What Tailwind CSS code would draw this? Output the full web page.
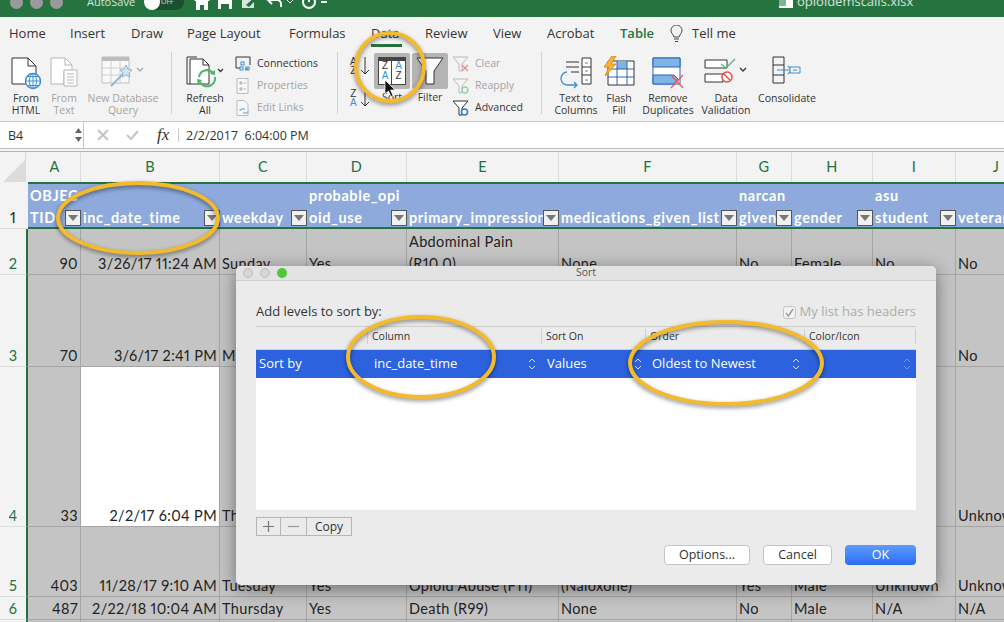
<!DOCTYPE html>
<html>
<head>
<meta charset="utf-8">
<script src="https://cdn.jsdelivr.net/npm/@tailwindcss/browser@4"></script>
</head>
<body class="m-0 bg-white overflow-hidden">
<div class="relative w-[1004px] h-[622px] overflow-hidden bg-[#f3f3f3] font-['Open_Sans',sans-serif] text-[#333]">

  <!-- Title bar -->
  <div class="h-[17px] bg-[#25743f] overflow-hidden text-white/80 text-[11px]">
    <div class="flex items-center h-[4px] pl-[10px]">
      <span class="w-[13px] h-[13px] rounded-full bg-[#9a9a9a] mr-[7px] shrink-0"></span>
      <span class="w-[13px] h-[13px] rounded-full bg-[#9a9a9a] mr-[7px] shrink-0"></span>
      <span class="w-[13px] h-[13px] rounded-full bg-[#9a9a9a] shrink-0"></span>
      <span class="ml-[24px] w-[57px] shrink-0">AutoSave</span>
      <span class="relative w-[40px] h-[16px] rounded-full bg-[#1c4f2f] shrink-0 text-[7px] pl-[17px] leading-[16px]">OFF<span class="absolute left-0 top-0 w-[16px] h-[16px] rounded-full bg-white"></span></span>
      <svg class="ml-[9px] shrink-0" width="18" height="18" viewBox="0 0 18 18"><path d="M1 8 9 1l8 7h-2v9h-4v-5H7v5H3V8z" fill="#fff"/></svg>
      <svg class="ml-[6px] shrink-0" width="16" height="16" viewBox="0 0 16 16"><path d="M1 1h11l3 3v11H1z" fill="#fff"/><path d="M4 10h8v5H4z" fill="#22713f"/></svg>
      <svg class="ml-[8px] shrink-0" width="18" height="18" viewBox="0 0 18 18"><path d="M1 3h12v12H1z" fill="#d9e6dd"/><path d="M5 12 15 3l2 2-9 9z" fill="#22713f"/></svg>
      <svg class="ml-[7px] shrink-0" width="18" height="14" viewBox="0 0 18 14"><path d="M6 1 2 5l4 4M2 5h9a4 4 0 0 1 4 4v3" fill="none" stroke="#fff" stroke-width="2"/></svg>
      <svg class="ml-[2px] shrink-0" width="8" height="6" viewBox="0 0 8 6"><path d="m1 1 3 3 3-3" fill="none" stroke="#fff"/></svg>
      <svg class="ml-[7px] shrink-0" width="16" height="16" viewBox="0 0 16 16"><circle cx="8" cy="8" r="6" fill="none" stroke="#fff" stroke-width="2"/><path d="M8 4v4" stroke="#fff" stroke-width="2"/></svg>
      <svg class="ml-[3px] shrink-0" width="8" height="14" viewBox="0 0 8 14"><path d="M1 7h6" stroke="#fff" stroke-width="2"/></svg>
      <svg class="ml-[451px] shrink-0" width="14" height="14" viewBox="0 0 14 14"><path d="M0 1h14v12H0z" fill="#fff"/><path d="M0 1h7v10H0z" fill="#7db595"/></svg>
      <span class="ml-[4px] shrink-0 text-[13px]">opioidemscalls.xlsx</span>
    </div>
  </div>

  <!-- Ribbon -->
  <div class="h-[105px] bg-[#f3f3f3] border-b border-[#c9c9c9]">
    <div class="relative flex h-[33px] items-center text-[13px] text-[#333] leading-none">
      <span class="ml-[9px] w-[61px]">Home</span>
      <span class="w-[61px]">Insert</span>
      <span class="w-[56px]">Draw</span>
      <span class="w-[102px]">Page Layout</span>
      <span class="w-[82px]">Formulas</span>
      <span class="relative w-[54px]">Data<span class="absolute left-0 top-[17px] w-[31px] h-[3px] bg-[#22713f]"></span></span>
      <span class="w-[68px]">Review</span>
      <span class="w-[54px]">View</span>
      <span class="w-[73px]">Acrobat</span>
      <span class="w-[50px] text-[#22713f] font-semibold">Table</span>
      <svg width="13" height="18" viewBox="0 0 13 18" class="mr-[9px]"><path d="M4 12C3 9 1 8 1 5.500a5.500 5.500 0 0 1 11 0C12 8 10 9 9 12zM4 14h5M5 16.500h3" fill="none" stroke="#444"/></svg>
      <span>Tell me</span>
    </div>

    <div class="flex h-[72px] pl-[7px] text-[10.5px] leading-[11.500px] text-center">
      <!-- From HTML -->
      <div class="w-[38px] flex flex-col items-center">
        <svg class="mt-[6px] h-[34px]" width="30" height="34" viewBox="0 0 30 34"><path d="M1 2h16l8 8v18H1z" fill="#fff" stroke="#333"/><path d="M17 2v8h8" fill="none" stroke="#333"/><circle cx="22" cy="25" r="7.500" fill="#fff" stroke="#3a8fd6" stroke-width="1.400"/><path d="M14.500 25h15M22 17.500v15M17 20.500h10M17 29.500h10" stroke="#3a8fd6"/><ellipse cx="22" cy="25" rx="3.500" ry="7.500" fill="none" stroke="#3a8fd6"/></svg>
        <span class="mt-[3px]">From<br>HTML</span>
      </div>
      <!-- From Text -->
      <div class="w-[38px] flex flex-col items-center text-[#a3a3a3]">
        <svg class="mt-[6px] h-[34px]" width="28" height="34" viewBox="0 0 28 34"><path d="M1 2h14l7 7v6H14v13H1z" fill="#fff" stroke="#b5b5b5"/><path d="M15 2v7h7" fill="none" stroke="#b5b5b5"/><path d="M14 14h13v16H14z" fill="#fff" stroke="#b5b5b5"/><path d="M17 18h7M17 21h7M17 24h7M17 27h7" stroke="#b5b5b5"/></svg>
        <span class="mt-[3px]">From<br>Text</span>
      </div>
      <!-- New Database Query -->
      <div class="w-[80px] flex flex-col items-center text-[#a3a3a3]">
        <svg class="mt-[6px] h-[34px]" width="44" height="34" viewBox="0 0 44 34"><path d="M1 1h27v26H1z" fill="#f8f8f8" stroke="#bdbdbd"/><path d="M1 1h27v4H1z" fill="#bdbdbd"/><path d="M10 5v22M19 5v22M1 12h27M1 19h27" stroke="#cfcfcf"/><path d="m10 30 14-14" stroke="#8bb8dc" stroke-width="2"/><path d="m25 9 2 4 4 1-3 3 1 4-4-2-4 2 1-4-3-3 4-1z" fill="#cfe2f1" stroke="#8bb8dc"/><path d="m36 12 3 3 3-3" fill="none" stroke="#aaa" stroke-width="1.400"/></svg>
        <span class="mt-[3px] whitespace-nowrap">New Database<br>Query</span>
      </div>
      <div class="w-px h-[62px] bg-[#d3d3d3] ml-[8px] mt-[2px]"></div>
      <!-- Refresh -->
      <div class="w-[44px] ml-[11px] flex flex-col items-center">
        <svg class="mt-[6px] h-[34px] overflow-visible" width="38" height="34" viewBox="0 0 38 34"><path d="M1 1h10M1 1v27h3" fill="none" stroke="#333"/><path d="M4 3h13l6 6v19H4z" fill="#fff" stroke="#333"/><path d="M17 3v6h6" fill="none" stroke="#333"/><path d="M13 21a8 8 0 0 1 14-4M29 21a8 8 0 0 1-15 5" fill="none" stroke="#4eb46a" stroke-width="2"/><path d="m24 18 5 1 0-5zM16 24l-5-1 1 6z" fill="#4eb46a"/><path d="m32 13 2.500 2.500L37 13" fill="none" stroke="#333" stroke-width="1.300"/></svg>
        <span class="mt-[3px]">Refresh<br>All</span>
      </div>
      <!-- Connections -->
      <div class="ml-[8px] w-[102px] flex flex-col gap-[6px] text-left pt-[6px] whitespace-nowrap">
        <div class="flex items-center h-[16px]"><svg width="16" height="16" viewBox="0 0 16 16"><path d="M1 12V1h14v8" fill="none" stroke="#333"/><path d="M1 12h4M10 13h3" stroke="#333"/><rect x="6" y="6" width="3" height="3" fill="none" stroke="#3a8fd6"/><rect x="5" y="11" width="3" height="3" fill="none" stroke="#3a8fd6"/><rect x="11" y="11" width="3" height="3" fill="none" stroke="#3a8fd6"/></svg><span class="ml-[6px]">Connections</span></div>
        <div class="flex items-center h-[16px] text-[#a3a3a3]"><svg width="16" height="16" viewBox="0 0 16 16"><path d="M2 0.500h11v15H2z" fill="#f8f8f8" stroke="#bbb"/><path d="M5 4h2v2H5zM5 10h2v2H5zM9 5h2M9 11h2" fill="none" stroke="#aaa"/></svg><span class="ml-[6px]">Properties</span></div>
        <div class="flex items-center h-[16px] text-[#a3a3a3]"><svg width="16" height="16" viewBox="0 0 16 16"><path d="M2 0.500h7l4 4v11H2z" fill="#f8f8f8" stroke="#bbb"/><path d="M5 11a2 2 0 0 1 2-2h3M13 11a2 2 0 0 1-2 2H8" fill="none" stroke="#8bb8dc" stroke-width="1.300"/></svg><span class="ml-[6px]">Edit Links</span></div>
      </div>
      <div class="w-px h-[62px] bg-[#d3d3d3] mt-[2px]"></div>
      <!-- Sort small -->
      <div class="w-[22px] ml-[12px] flex flex-col gap-[12px] pt-[6px] font-['Liberation_Sans',sans-serif] text-[10px] leading-[9px]">
        <div class="flex items-center"><span>A<br>Z</span><svg width="10" height="20" viewBox="0 0 10 20" class="ml-[3px]"><path d="M5 1v17M1 14l4 4 4-4" fill="none" stroke="#333"/></svg></div>
        <div class="flex items-center"><span>Z<br><span class="text-[#3a8fd6]">A</span></span><svg width="10" height="20" viewBox="0 0 10 20" class="ml-[3px]"><path d="M5 1v17M1 14l4 4 4-4" fill="none" stroke="#333"/></svg></div>
      </div>
      <!-- Sort -->
      <div class="w-[36px] ml-[2px] flex flex-col items-center">
        <div class="mt-[3px] w-[36px] h-[36px] bg-[#b4b4b4] rounded-[2px] flex items-center justify-center">
          <div class="w-[28px] h-[28px] border border-[#444] border-t-[4px] bg-white grid grid-cols-2 font-['Liberation_Sans',sans-serif] text-[10px] leading-[10px]">
            <span class="border-r border-[#444]">Z<br><span class="text-[#3a8fd6]">A</span></span>
            <span><span class="text-[#3a8fd6]">A</span><br>Z</span>
          </div>
        </div>
        <span class="mt-[3px]">Sort</span>
      </div>
      <!-- Filter -->
      <div class="w-[36px] ml-[2px] flex flex-col items-center">
        <div class="mt-[3px] w-[36px] h-[36px] bg-[#b4b4b4] rounded-[2px] flex items-center justify-center">
          <svg width="28" height="30" viewBox="0 0 28 30"><path d="M1 2h26L18 15v13h-8V15z" fill="#fff" stroke="#333"/></svg>
        </div>
        <span class="mt-[3px]">Filter</span>
      </div>
      <!-- Clear etc -->
      <div class="ml-[4px] w-[89px] flex flex-col gap-[6px] text-left pt-[6px]">
        <div class="flex items-center h-[16px] text-[#a3a3a3]"><svg width="17" height="16" viewBox="0 0 17 16"><path d="M1 1h15L10 8v7H7V8z" fill="none" stroke="#bbb"/><path d="m10 9 6 6m0-6-6 6" stroke="#e88" stroke-width="1.200"/></svg><span class="ml-[6px]">Clear</span></div>
        <div class="flex items-center h-[16px] text-[#a3a3a3]"><svg width="17" height="16" viewBox="0 0 17 16"><path d="M1 1h15L10 8v7H7V8z" fill="none" stroke="#bbb"/><circle cx="13" cy="12" r="3" fill="none" stroke="#8fd3a2" stroke-width="1.300"/></svg><span class="ml-[6px]">Reapply</span></div>
        <div class="flex items-center h-[16px]"><svg width="17" height="16" viewBox="0 0 17 16"><path d="M1 1h15L10 8v7H7V8z" fill="#fff" stroke="#333"/><circle cx="12.500" cy="12" r="3" fill="#fff" stroke="#2e7cc4" stroke-width="1.600"/></svg><span class="ml-[6px]">Advanced</span></div>
      </div>
      <div class="w-px h-[62px] bg-[#d3d3d3] mt-[2px]"></div>
      <!-- Text to Columns -->
      <div class="w-[68px] flex flex-col items-center">
        <svg class="mt-[6px] h-[34px]" width="32" height="34" viewBox="0 0 32 34"><path d="M6 6h13M6 11h13M11 16h8" stroke="#333"/><path d="M22 2h9v26h-9zM22 11h9M22 19h9" fill="#fff" stroke="#333"/><path d="M25 7h3M25 15h3M25 24h3" stroke="#3a8fd6"/><path d="M7 16a6 6 0 0 0 1 13h9m-3-3 3 3-3 3" fill="none" stroke="#3a8fd6" stroke-width="1.300"/></svg>
        <span class="mt-[3px] whitespace-nowrap">Text to<br>Columns</span>
      </div>
      <!-- Flash Fill -->
      <div class="w-[42px] -ml-[12px] flex flex-col items-center">
        <svg class="mt-[6px] h-[34px]" width="32" height="34" viewBox="0 0 32 34"><path d="M5 5h26v24H5z" fill="#fff" stroke="#333"/><path d="M14 5h10v8H14z" fill="#7fb5e6"/><path d="M5 13h26M5 21h26M14 5v24M24 5v24" stroke="#2b63b8"/><path d="M9 0 1 11h5l-4 9 11-12H8l5-8z" fill="#f7b33c" stroke="#e08a1e"/></svg>
        <span class="mt-[3px]">Flash<br>Fill</span>
      </div>
      <!-- Remove Dup -->
      <div class="w-[56px] flex flex-col items-center">
        <svg class="mt-[6px] h-[34px]" width="32" height="34" viewBox="0 0 32 34"><path d="M1 2h27v26H1z" fill="#fff" stroke="#2b63b8"/><path d="M1 2h27v9H1zM1 19h21l4 4-4 5H1z" fill="#7fb5e6" stroke="#2b63b8"/><path d="m19 19 12 13m0-13L19 32" stroke="#ef5b5b" stroke-width="1.300"/></svg>
        <span class="mt-[3px] whitespace-nowrap">Remove<br>Duplicates</span>
      </div>
      <!-- Data Validation -->
      <div class="w-[60px] flex flex-col items-center">
        <svg class="mt-[6px] h-[34px]" width="44" height="34" viewBox="0 0 44 34"><path d="M1 4h22v8H1zM1 18h18v8H1z" fill="#fff" stroke="#333"/><path d="m17 8 5 4 9-9" fill="none" stroke="#4eb46a" stroke-width="1.300"/><circle cx="23" cy="21" r="5" fill="#fff" stroke="#e84c4c" stroke-width="1.500"/><path d="m19.500 17.500 7 7" stroke="#e84c4c" stroke-width="1.500"/><path d="m36 12 3 3 3-3" fill="none" stroke="#333" stroke-width="1.300"/></svg>
        <span class="mt-[3px]">Data<br>Validation</span>
      </div>
      <!-- Consolidate -->
      <div class="w-[62px] flex flex-col items-center">
        <svg class="mt-[6px] h-[34px]" width="30" height="34" viewBox="0 0 30 34"><path d="M1 1h11v26H1zM1 9h11M1 19h11" fill="none" stroke="#333"/><path d="M5 14h15m-4-4 4 4-4 4" fill="none" stroke="#3a8fd6" stroke-width="1.200"/><path d="M18 11h10v6H18z" fill="#f3f3f3" stroke="#3a8fd6"/><path d="M21 14h4" stroke="#3a8fd6"/></svg>
        <span class="mt-[3px]">Consolidate</span>
      </div>
    </div>
  </div>

  <!-- Formula bar -->
  <div class="flex h-[27px] bg-white border-b border-[#c0c0c0] items-center text-[12.5px]">
    <span class="w-[74px] pl-[8px] pt-[3px]">B4</span>
    <svg width="9" height="16" viewBox="0 0 9 16"><path d="M1 6h7L4.500 1zM1 10h7l-3.500 5z" fill="#666"/></svg>
    <span class="w-px h-[27px] bg-[#c9c9c9]"></span>
    <svg class="ml-[13px]" width="12" height="12" viewBox="0 0 12 12"><path d="m1 1 10 10m0-10L1 11" stroke="#c4c4c4" stroke-width="2"/></svg>
    <svg class="ml-[17px]" width="13" height="12" viewBox="0 0 13 12"><path d="m1 6 4 4 7-8" fill="none" stroke="#c4c4c4" stroke-width="2"/></svg>
    <span class="ml-[18px] w-[20px] font-['Liberation_Serif',serif] italic text-[17px]">fx</span>
    <span class="w-px h-[14px] bg-[#c9c9c9] ml-[1px]"></span>
    <span class="ml-[7px] pt-[2px] text-[12.5px] whitespace-pre">2/2/2017  6:04:00 PM</span>
  </div>

  <!-- Sheet -->
  <div class="pt-[1px] bg-[#f3f3f3] border-t border-[#f3f3f3]">
  <div class="grid grid-cols-[26px_55px_139px_87px_100px_152px_178px_55px_81px_83px_80px] grid-rows-[30px_47px_46px_92px_160px_70px_23px_30px] font-['Lato',sans-serif] text-[14.5px] tracking-[0.35px] leading-[18px] text-[#222] proportional-nums border-t border-[#b5b5b5] bg-[#f3f3f3] [&>*]:flex [&>*]:overflow-hidden [&>*]:whitespace-nowrap">
    <!-- column header -->
    <div class="bg-[#f3f3f3] items-end justify-end border-r border-[#d9d9d9]"><svg width="24" height="24" viewBox="0 0 24 24"><path d="M24 2v22H2z" fill="#dcdcdc"/></svg></div>
    <div class="bg-[#f3f3f3] items-center justify-center pl-[3px] text-[#22713f] border-r border-[#dcdcdc]">A</div>
    <div class="bg-[#f3f3f3] items-center justify-center text-[#22713f] border-r border-[#dcdcdc]">B</div>
    <div class="bg-[#f3f3f3] items-center justify-center text-[#22713f] border-r border-[#dcdcdc]">C</div>
    <div class="bg-[#f3f3f3] items-center justify-center text-[#22713f] border-r border-[#dcdcdc]">D</div>
    <div class="bg-[#f3f3f3] items-center justify-center text-[#22713f] border-r border-[#dcdcdc]">E</div>
    <div class="bg-[#f3f3f3] items-center justify-center text-[#22713f] border-r border-[#dcdcdc]">F</div>
    <div class="bg-[#f3f3f3] items-center justify-center text-[#22713f] border-r border-[#dcdcdc]">G</div>
    <div class="bg-[#f3f3f3] items-center justify-center text-[#22713f] border-r border-[#dcdcdc]">H</div>
    <div class="bg-[#f3f3f3] items-center justify-center text-[#22713f] border-r border-[#dcdcdc]">I</div>
    <div class="bg-[#f3f3f3] items-center justify-center text-[#22713f]">J</div>

    <!-- row 1 -->
    <div class="bg-[#f3f3f3] items-end justify-center pb-[1px] border-b border-[#dcdcdc]">1</div>
    <div class="ml-[2px] col-span-10 !grid grid-cols-[53px_139px_87px_100px_152px_178px_55px_81px_83px_80px] bg-[#8ea9db] border-y-2 border-[#22713f] text-white font-bold tracking-[0.6px] leading-[22px] [&>*]:relative [&>*]:-mb-[2px] [&>*]:block [&>*]:self-end [&>*]:pl-[2px] [&>*]:overflow-hidden">
      <div>OBJEC<br>TID<span class="absolute right-0 bottom-[3px] w-[16px] h-[16px] bg-[#f0f0f0] border border-[#555] flex items-center justify-center"><svg width="10" height="6" viewBox="0 0 10 6"><path d="M0 0h10L5 6z" fill="#777"/></svg></span></div>
      <div>inc_date_time<span class="absolute right-0 bottom-[3px] w-[16px] h-[16px] bg-[#f0f0f0] border border-[#555] flex items-center justify-center"><svg width="10" height="6" viewBox="0 0 10 6"><path d="M0 0h10L5 6z" fill="#777"/></svg></span></div>
      <div>weekday<span class="absolute right-0 bottom-[3px] w-[16px] h-[16px] bg-[#f0f0f0] border border-[#555] flex items-center justify-center"><svg width="10" height="6" viewBox="0 0 10 6"><path d="M0 0h10L5 6z" fill="#777"/></svg></span></div>
      <div>probable_opi<br>oid_use<span class="absolute right-0 bottom-[3px] w-[16px] h-[16px] bg-[#f0f0f0] border border-[#555] flex items-center justify-center"><svg width="10" height="6" viewBox="0 0 10 6"><path d="M0 0h10L5 6z" fill="#777"/></svg></span></div>
      <div>primary_impression<span class="absolute right-0 bottom-[3px] w-[16px] h-[16px] bg-[#f0f0f0] border border-[#555] flex items-center justify-center"><svg width="10" height="6" viewBox="0 0 10 6"><path d="M0 0h10L5 6z" fill="#777"/></svg></span></div>
      <div>medications_given_list<span class="absolute right-0 bottom-[3px] w-[16px] h-[16px] bg-[#f0f0f0] border border-[#555] flex items-center justify-center"><svg width="10" height="6" viewBox="0 0 10 6"><path d="M0 0h10L5 6z" fill="#777"/></svg></span></div>
      <div>narcan<br>given<span class="absolute right-0 bottom-[3px] w-[16px] h-[16px] bg-[#f0f0f0] border border-[#555] flex items-center justify-center"><svg width="10" height="6" viewBox="0 0 10 6"><path d="M0 0h10L5 6z" fill="#777"/></svg></span></div>
      <div>gender<span class="absolute right-0 bottom-[3px] w-[16px] h-[16px] bg-[#f0f0f0] border border-[#555] flex items-center justify-center"><svg width="10" height="6" viewBox="0 0 10 6"><path d="M0 0h10L5 6z" fill="#777"/></svg></span></div>
      <div>asu<br>student<span class="absolute right-0 bottom-[3px] w-[16px] h-[16px] bg-[#f0f0f0] border border-[#555] flex items-center justify-center"><svg width="10" height="6" viewBox="0 0 10 6"><path d="M0 0h10L5 6z" fill="#777"/></svg></span></div>
      <div>veteran</div>
    </div>

    <!-- row 2 -->
    <div class="bg-[#f3f3f3] items-end justify-center text-[#22713f] pb-[1px] border-b border-[#dcdcdc]">2</div>
    <div class="bg-[#c4c4c4] border-l-2 border-[#22713f] border-r border-b border-r-[#a5a5a5] border-b-[#a5a5a5] items-end justify-end pr-[2px] pb-[1px]">90</div>
    <div class="bg-[#c4c4c4] border-r border-b border-[#a5a5a5] items-end justify-end pr-[2px] pb-[1px]">3/26/17 11:24 AM</div>
    <div class="bg-[#c4c4c4] border-r border-b border-[#a5a5a5] items-end pl-[2px] pb-[1px]">Sunday</div>
    <div class="bg-[#c4c4c4] border-r border-b border-[#a5a5a5] items-end pl-[2px] pb-[1px]">Yes</div>
    <div class="bg-[#c4c4c4] border-r border-b border-[#a5a5a5] items-start pl-[2px] pt-[2px] leading-[22px]">Abdominal Pain<br>(R10.0)</div>
    <div class="bg-[#c4c4c4] border-r border-b border-[#a5a5a5] items-end pl-[2px] pb-[1px]">None</div>
    <div class="bg-[#c4c4c4] border-r border-b border-[#a5a5a5] items-end pl-[2px] pb-[1px]">No</div>
    <div class="bg-[#c4c4c4] border-r border-b border-[#a5a5a5] items-end pl-[2px] pb-[1px]">Female</div>
    <div class="bg-[#c4c4c4] border-r border-b border-[#a5a5a5] items-end pl-[2px] pb-[1px]">No</div>
    <div class="bg-[#c4c4c4] border-b border-[#a5a5a5] items-end pl-[2px] pb-[1px]">No</div>

    <!-- row 3 -->
    <div class="bg-[#f3f3f3] items-end justify-center text-[#22713f] pb-[1px] border-b border-[#dcdcdc]">3</div>
    <div class="bg-[#c4c4c4] border-l-2 border-[#22713f] border-r border-b border-r-[#a5a5a5] border-b-[#a5a5a5] items-end justify-end pr-[2px] pb-[1px]">70</div>
    <div class="bg-[#c4c4c4] border-r border-b border-[#a5a5a5] items-end justify-end pr-[2px] pb-[1px]">3/6/17 2:41 PM</div>
    <div class="bg-[#c4c4c4] border-r border-b border-[#a5a5a5] items-end pl-[2px] pb-[1px]">Monday</div>
    <div class="bg-[#c4c4c4] border-r border-b border-[#a5a5a5]"></div>
    <div class="bg-[#c4c4c4] border-r border-b border-[#a5a5a5]"></div>
    <div class="bg-[#c4c4c4] border-r border-b border-[#a5a5a5]"></div>
    <div class="bg-[#c4c4c4] border-r border-b border-[#a5a5a5]"></div>
    <div class="bg-[#c4c4c4] border-r border-b border-[#a5a5a5]"></div>
    <div class="bg-[#c4c4c4] border-r border-b border-[#a5a5a5]"></div>
    <div class="bg-[#c4c4c4] border-b border-[#a5a5a5] items-end pl-[2px] pb-[1px]">No</div>

    <!-- row 4 -->
    <div class="bg-[#f3f3f3] items-end justify-center text-[#22713f] pb-[1px] border-b border-[#dcdcdc]">4</div>
    <div class="bg-[#c4c4c4] border-l-2 border-[#22713f] border-r border-b border-r-[#a5a5a5] border-b-[#a5a5a5] items-end justify-end pr-[2px] pb-[1px]">33</div>
    <div class="bg-white border-r border-b border-[#a5a5a5] items-end justify-end pr-[2px] pb-[1px]">2/2/17 6:04 PM</div>
    <div class="bg-[#c4c4c4] border-r border-b border-[#a5a5a5] items-end pl-[2px] pb-[1px]">Thursday</div>
    <div class="bg-[#c4c4c4] border-r border-b border-[#a5a5a5]"></div>
    <div class="bg-[#c4c4c4] border-r border-b border-[#a5a5a5]"></div>
    <div class="bg-[#c4c4c4] border-r border-b border-[#a5a5a5]"></div>
    <div class="bg-[#c4c4c4] border-r border-b border-[#a5a5a5]"></div>
    <div class="bg-[#c4c4c4] border-r border-b border-[#a5a5a5]"></div>
    <div class="bg-[#c4c4c4] border-r border-b border-[#a5a5a5]"></div>
    <div class="bg-[#c4c4c4] border-b border-[#a5a5a5] items-end pl-[2px] pb-[1px]">Unknown</div>

    <!-- row 5 -->
    <div class="bg-[#f3f3f3] items-end justify-center text-[#22713f] pb-[1px] border-b border-[#dcdcdc]">5</div>
    <div class="bg-[#c4c4c4] border-l-2 border-[#22713f] border-r border-b border-r-[#a5a5a5] border-b-[#a5a5a5] items-end justify-end pr-[2px] pb-[1px]">403</div>
    <div class="bg-[#c4c4c4] border-r border-b border-[#a5a5a5] items-end justify-end pr-[2px] pb-[1px]">11/28/17 9:10 AM</div>
    <div class="bg-[#c4c4c4] border-r border-b border-[#a5a5a5] items-end pl-[2px] pb-[1px]">Tuesday</div>
    <div class="bg-[#c4c4c4] border-r border-b border-[#a5a5a5] items-end pl-[2px] pb-[1px]">Yes</div>
    <div class="bg-[#c4c4c4] border-r border-b border-[#a5a5a5] items-end pl-[2px] pb-[1px]">Opioid Abuse (F11)</div>
    <div class="bg-[#c4c4c4] border-r border-b border-[#a5a5a5] items-end pl-[2px] pb-[1px]">(Naloxone)</div>
    <div class="bg-[#c4c4c4] border-r border-b border-[#a5a5a5] items-end pl-[2px] pb-[1px]">Yes</div>
    <div class="bg-[#c4c4c4] border-r border-b border-[#a5a5a5] items-end pl-[2px] pb-[1px]">Male</div>
    <div class="bg-[#c4c4c4] border-r border-b border-[#a5a5a5] items-end pl-[2px] pb-[1px]">Unknown</div>
    <div class="bg-[#c4c4c4] border-b border-[#a5a5a5] items-end pl-[2px] pb-[1px]">Unknown</div>

    <!-- row 6 -->
    <div class="bg-[#f3f3f3] items-end justify-center text-[#22713f] pb-[1px] border-b border-[#dcdcdc]">6</div>
    <div class="bg-[#c4c4c4] border-l-2 border-[#22713f] border-r border-b border-r-[#a5a5a5] border-b-[#a5a5a5] items-end justify-end pr-[2px] pb-[1px]">487</div>
    <div class="bg-[#c4c4c4] border-r border-b border-[#a5a5a5] items-end justify-end pr-[2px] pb-[1px]">2/22/18 10:04 AM</div>
    <div class="bg-[#c4c4c4] border-r border-b border-[#a5a5a5] items-end pl-[2px] pb-[1px]">Thursday</div>
    <div class="bg-[#c4c4c4] border-r border-b border-[#a5a5a5] items-end pl-[2px] pb-[1px]">Yes</div>
    <div class="bg-[#c4c4c4] border-r border-b border-[#a5a5a5] items-end pl-[2px] pb-[1px]">Death (R99)</div>
    <div class="bg-[#c4c4c4] border-r border-b border-[#a5a5a5] items-end pl-[2px] pb-[1px]">None</div>
    <div class="bg-[#c4c4c4] border-r border-b border-[#a5a5a5] items-end pl-[2px] pb-[1px]">No</div>
    <div class="bg-[#c4c4c4] border-r border-b border-[#a5a5a5] items-end pl-[2px] pb-[1px]">Male</div>
    <div class="bg-[#c4c4c4] border-r border-b border-[#a5a5a5] items-end pl-[2px] pb-[1px]">N/A</div>
    <div class="bg-[#c4c4c4] border-b border-[#a5a5a5] items-end pl-[2px] pb-[1px]">N/A</div>

    <!-- row 7 -->
    <div class="bg-[#f3f3f3]"></div>
    <div class="bg-[#c4c4c4] border-l-2 border-[#22713f] border-r border-r-[#a5a5a5]"></div>
    <div class="bg-[#c4c4c4] border-r border-[#a5a5a5]"></div>
    <div class="bg-[#c4c4c4] border-r border-[#a5a5a5]"></div>
    <div class="bg-[#c4c4c4] border-r border-[#a5a5a5]"></div>
    <div class="bg-[#c4c4c4] border-r border-[#a5a5a5]"></div>
    <div class="bg-[#c4c4c4] border-r border-[#a5a5a5]"></div>
    <div class="bg-[#c4c4c4] border-r border-[#a5a5a5]"></div>
    <div class="bg-[#c4c4c4] border-r border-[#a5a5a5]"></div>
    <div class="bg-[#c4c4c4] border-r border-[#a5a5a5]"></div>
    <div class="bg-[#c4c4c4]"></div>
  </div>
  </div>

  <!-- Sort dialog -->
  <div class="absolute left-[236px] top-[266px] w-[700px] h-[319px] bg-[#ebebeb] rounded-[5px] shadow-[0_4px_18px_rgba(0,0,0,0.45)] text-[13px] text-[#333] flex flex-col">
    <div class="relative h-[15px] flex items-center justify-center rounded-t-[5px] bg-[#e3e3e3] border-b border-[#d0d0d0] text-[10.5px] text-[#555]">
      <div class="absolute left-[7px] top-[2px] flex gap-[7px]">
        <span class="w-[10px] h-[10px] rounded-full bg-[#d6d6d6] border border-[#bdbdbd]"></span>
        <span class="w-[10px] h-[10px] rounded-full bg-[#d6d6d6] border border-[#bdbdbd]"></span>
        <span class="w-[10px] h-[10px] rounded-full bg-[#54c43c]"></span>
      </div>
      Sort
    </div>
    <div class="flex items-center justify-between px-[20px] mt-[22px] h-[18px]">
      <span>Add levels to sort by:</span>
      <span class="flex items-center text-[#adadad]"><span class="w-[13px] h-[13px] mr-[4px] bg-[#f2f2f2] border border-[#c4c4c4] rounded-[3px] flex items-center justify-center"><svg width="9" height="9" viewBox="0 0 9 9"><path d="m1 5 2.500 3L8 1" fill="none" stroke="#999" stroke-width="1.400"/></svg></span>My list has headers</span>
    </div>
    <div class="mx-[20px] mt-[5px] h-[184px] flex flex-col">
      <div class="grid grid-cols-[111px_174px_104px_159px_112px] h-[24px] bg-[#ebebeb] border-t border-b border-[#cfcfcf] text-[10.5px] text-[#333] items-start pt-[2px]">
        <span></span>
        <span class="border-l border-[#cfcfcf] pl-[4px] h-[15px] leading-[15px]">Column</span>
        <span class="border-l border-[#cfcfcf] pl-[4px] h-[15px] leading-[15px]">Sort On</span>
        <span class="border-l border-[#cfcfcf] pl-[4px] h-[15px] leading-[15px]">Order</span>
        <span class="border-l border-[#cfcfcf] pl-[4px] h-[15px] leading-[15px] border-r">Color/Icon</span>
      </div>
      <div class="grid grid-cols-[111px_174px_104px_159px_112px] h-[28px] bg-[#2c62dd] text-white items-center">
        <span class="pl-[3px]">Sort by</span>
        <span class="pl-[7px] flex items-center justify-between pr-[5px]">inc_date_time<svg width="8" height="14" viewBox="0 0 8 14"><path d="m1 5 3-3 3 3M1 9l3 3 3-3" fill="none" stroke="#dbe5fb"/></svg></span>
        <span class="pl-[6px] flex items-center justify-between pr-[3px]">Values<svg width="8" height="14" viewBox="0 0 8 14"><path d="m1 5 3-3 3 3M1 9l3 3 3-3" fill="none" stroke="#dbe5fb"/></svg></span>
        <span class="pl-[7px] flex items-center justify-between pr-[4px]">Oldest to Newest<svg width="8" height="14" viewBox="0 0 8 14"><path d="m1 5 3-3 3 3M1 9l3 3 3-3" fill="none" stroke="#dbe5fb"/></svg></span>
        <span class="flex items-center justify-end pr-[5px]"><svg width="8" height="14" viewBox="0 0 8 14"><path d="m1 5 3-3 3 3M1 9l3 3 3-3" fill="none" stroke="#6f94ea"/></svg></span>
      </div>
      <div class="flex-1 bg-white"></div>
    </div>
    <div class="ml-[20px] mt-[7px] flex h-[19px] w-[96px] border border-[#b5b5b5] bg-[#ebebeb] text-[12px]">
      <span class="w-[24px] border-r border-[#b5b5b5] flex items-center justify-center"><svg width="11" height="11" viewBox="0 0 11 11"><path d="M5.500 0v11M0 5.500h11" stroke="#777" stroke-width="1.200"/></svg></span>
      <span class="w-[26px] border-r border-[#b5b5b5] flex items-center justify-center"><svg width="11" height="3" viewBox="0 0 11 3"><path d="M0 1.500h11" stroke="#999" stroke-width="1.200"/></svg></span>
      <span class="flex-1 text-center leading-[17px]">Copy</span>
    </div>
    <div class="flex justify-end gap-[13px] px-[20px] mt-[9px] text-[12.5px]">
      <span class="w-[86px] h-[20px] bg-white rounded-[4px] border border-[#c4c4c4] text-center leading-[18px]">Options...</span>
      <span class="w-[69px] h-[20px] bg-white rounded-[4px] border border-[#c4c4c4] text-center leading-[18px]">Cancel</span>
      <span class="w-[71px] h-[20px] rounded-[4px] bg-gradient-to-b from-[#5f9bfb] to-[#2a6cf6] text-white text-center leading-[20px]">OK</span>
    </div>
  </div>

  <!-- Yellow annotation ovals -->
  <svg class="absolute inset-0 pointer-events-none" width="1004" height="622" viewBox="0 0 1004 622" fill="none">
    <g class="[filter:drop-shadow(0_2px_2px_rgba(0,0,0,0.45))]" stroke="#f2ba2c" stroke-width="4">
      <circle cx="390" cy="67" r="34"/>
      <ellipse cx="138" cy="218" rx="80" ry="35"/>
      <ellipse cx="421" cy="357" rx="73" ry="40"/>
      <ellipse cx="726" cy="363" rx="96" ry="41"/>
    </g>
    <path d="M385 80v14l3.500-3 2.500 5.500 2-1-2.500-5.500h4.500z" fill="#111" stroke="#fff" stroke-width="0.700"/>
  </svg>
</div>
</body>
</html>
